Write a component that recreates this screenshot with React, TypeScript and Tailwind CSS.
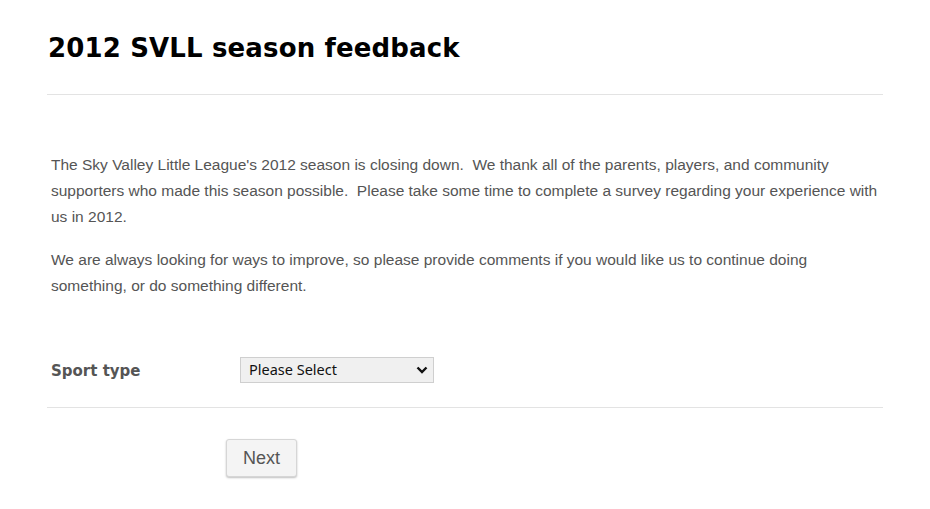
import React from 'react';

const App: React.FC = () => {
  return (
    <div className="min-h-screen bg-white px-[47px] pt-[30px]">
      {/* header */}
      <div className="border-b border-[#e3e3e3] pb-[28px]">
        <h1 className="pl-px text-[26px] font-bold leading-[36px] tracking-[0.15px] text-black [font-family:'DejaVu_Sans',Verdana,sans-serif]">
          2012 SVLL season feedback
        </h1>
      </div>

      {/* intro text */}
      <div className="px-1 pt-[57px] pb-[31px] text-[15.5px] leading-[26px] text-[#555] [font-family:'Liberation_Sans',Arial,sans-serif]">
        <p className="mb-[17px]">
          The Sky Valley Little League's 2012 season is closing down.&nbsp; We thank all of the parents, players, and community
          supporters who made this season possible.&nbsp; Please take some time to complete a survey regarding your experience with
          us in 2012.
        </p>
        <p>
          We are always looking for ways to improve, so please provide comments if you would like us to continue doing
          something, or do something different.
        </p>
      </div>

      {/* question */}
      <div className="flex items-center border-b border-[#e3e3e3] pt-[27px] pb-[24px]">
        <label className="mt-[3px] w-[193px] pl-1 text-[15px] font-bold text-[#555] [font-family:'DejaVu_Sans',Verdana,sans-serif]">
          Sport type
        </label>
        <div className="relative">
          <select className="h-[26px] w-[194px] appearance-none border border-[#cfcfcf] bg-[#f0f0f0] pl-2 pr-6 text-[14.5px] text-[#111] [font-family:'Noto_Sans',Tahoma,sans-serif] outline-none">
            <option>Please Select</option>
          </select>
          <svg
            className="pointer-events-none absolute right-[6px] top-[8px] h-[10px] w-[12px]"
            viewBox="0 0 12 10"
            fill="none"
          >
            <path d="M1.5 2.5 L6 7 L10.5 2.5" stroke="#111" strokeWidth="2.4" />
          </svg>
        </div>
      </div>

      {/* actions */}
      <div className="pl-[179px] pt-[31px]">
        <button className="h-[38px] w-[71px] rounded-[3px] border border-[#d6d6d6] bg-[#f4f4f4] text-[18px] text-[#555] shadow-[0_1px_2px_rgba(0,0,0,0.25)] [font-family:'Liberation_Sans',Arial,sans-serif]">
          Next
        </button>
      </div>
    </div>
  );
};

export default App;
